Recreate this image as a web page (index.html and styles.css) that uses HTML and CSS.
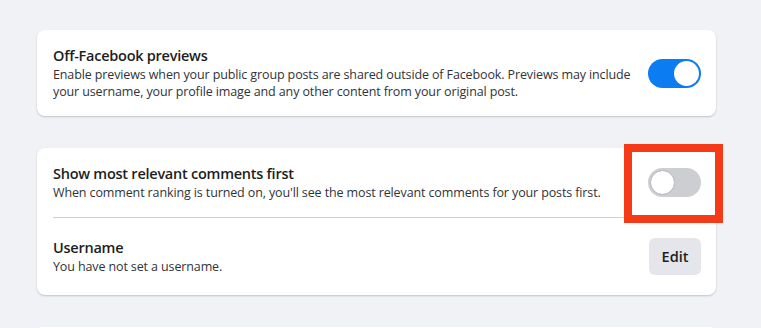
FILE: index.html
```html
<!DOCTYPE html>
<html>
<head>
	<title>Group settings</title>
	<link rel="stylesheet" href="styles.css">
</head>

<body>
	<div class="card">
		<div class="row">
			<div class="text">
				<div class="title">Off-Facebook previews</div>
				<div class="desc">Enable previews when your public group posts are shared outside of Facebook. Previews may include your username, your profile image and any other content from your original post.</div>
			</div>
			<div class="toggle on"><span class="knob"></span></div>
		</div>
	</div>

	<div class="card">
		<div class="row">
			<div class="text">
				<div class="title">Show most relevant comments first</div>
				<div class="desc">When comment ranking is turned on, you'll see the most relevant comments for your posts first.</div>
			</div>
			<div class="toggle marked"><span class="knob"></span><span class="highlight"></span></div>
		</div>
		<div class="row split">
			<div class="text">
				<div class="title">Username</div>
				<div class="desc">You have not set a username.</div>
			</div>
			<button class="edit">Edit</button>
		</div>
	</div>

	<div class="card stub"></div>
</body>
</html>
```

FILE: styles.css
```css
body {
	margin: 0;
	padding: 30px 0 0 37px;
	background: #f0f2f5;
	font-family: "Open Sans", "Noto Sans", sans-serif;
	color: #1c1e21;
	overflow: hidden;
}

.card {
	width: 679px;
	background: #fff;
	border-radius: 8px;
	box-shadow: 0 1px 2px rgba(0, 0, 0, 0.2);
	margin-bottom: 32px;
}

.stub {
	height: 10px;
	margin-bottom: 0;
}

.row {
	display: flex;
	align-items: center;
	justify-content: space-between;
	gap: 10px;
	padding: 16px 15px 16px 16px;
}

.split {
	margin-left: 16px;
	padding: 20px 15px 20px 0;
	border-top: 1px solid #ced0d4;
}

.title {
	font-size: 14.5px;
	font-weight: 600;
	line-height: 20px;
	letter-spacing: -0.25px;
}

.desc {
	font-size: 12.5px;
	line-height: 17px;
	color: #303338;
	letter-spacing: -0.12px;
}

.toggle {
	position: relative;
	flex: none;
	width: 53px;
	height: 29px;
	border-radius: 15px;
	background: #ccced2;
	box-sizing: border-box;
}

.toggle .knob {
	position: absolute;
	top: 2px;
	left: 2px;
	width: 25px;
	height: 25px;
	border-radius: 50%;
	background: #fff;
	box-sizing: border-box;
	border: 1px solid #b0b3b8;
}

.toggle.on {
	background: #0b7cf2;
}

.toggle.on .knob {
	left: 26px;
	border: none;
}

.highlight {
	position: absolute;
	top: -24px;
	left: -24px;
	right: -22px;
	bottom: -26px;
	border: 8px solid #f43a17;
}

.edit {
	flex: none;
	width: 52px;
	height: 37px;
	border: none;
	border-radius: 6px;
	background: #e4e6eb;
	font-family: "Open Sans", "Noto Sans", sans-serif;
	font-size: 14.5px;
	font-weight: 600;
	color: #1c1e21;
	padding: 0;
}
```
